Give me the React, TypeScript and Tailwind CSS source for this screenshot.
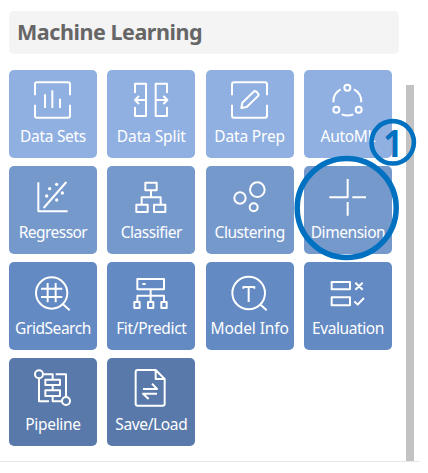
import type { ReactNode } from "react";

type Tile = { label: string; color: string; spacing: string; icon: ReactNode };

const ROW1 = "bg-[#90b0e1]";
const ROW2 = "bg-[#7699cc]";
const ROW3 = "bg-[#638ac3]";
const ROW4 = "bg-[#5879aa]";

const frame = "M78 76V43Q78 37 84 37H177Q183 37 183 43V76M183 104V137Q183 143 177 143H84Q78 143 78 137V104";

const tiles: Tile[] = [
  {
    label: "Data Sets", color: ROW1, spacing: "tracking-[-0.3px]",
    icon: <><path d={frame} /><path d="M108 73V114M130 61V114M153 86V114" /></>,
  },
  {
    label: "Data Split", color: ROW1, spacing: "tracking-[-0.1px]",
    icon: <path d="M84 69V41H117V138H84V111M180 69V41H146V138H180V111M117 90H84M96 78L84 90L96 102M146 90H181M169 78L181 90L169 102" />,
  },
  {
    label: "Data Prep", color: ROW1, spacing: "tracking-[-0.15px]",
    icon: <><path d={frame} /><path d="M106 114L109 98L142 66Q147 61 152 66L156 70Q160 74 155 79L122 111Z" /></>,
  },
  {
    label: "AutoML", color: ROW1, spacing: "tracking-[-0.3px]",
    icon: <><circle cx="130" cy="53" r="9" /><circle cx="97" cy="119" r="9" /><circle cx="164" cy="119" r="9" /><path d="M88 97Q87 70 110 58M150 58Q173 70 172 97M113 133Q130 140 148 133" /></>,
  },
  {
    label: "Regressor", color: ROW2, spacing: "tracking-[-0.55px]",
    icon: <><path d="M88 49V136H176M104 126L172 48" /><g fill="white" stroke="none"><circle cx="122" cy="68" r="5" /><circle cx="113" cy="90" r="5" /><circle cx="143" cy="55" r="5" /><circle cx="160" cy="81" r="5" /><circle cx="143" cy="102" r="5" /></g></>,
  },
  {
    label: "Classifier", color: ROW2, spacing: "tracking-[-0.45px]",
    icon: <path d="M115 50H149V73H115ZM132 73V94M104 115V94H161V115M88 116H122V138H88ZM141 116H175V138H141Z" />,
  },
  {
    label: "Clustering", color: ROW2, spacing: "tracking-[-0.45px]",
    icon: <><circle cx="154" cy="71" r="22" /><circle cx="102" cy="96" r="17" /><circle cx="143" cy="124" r="12" /></>,
  },
  {
    label: "Dimension", color: ROW2, spacing: "tracking-[-0.45px]",
    icon: <path d="M131 39V94H76M145 94H186M131 108V149" />,
  },
  {
    label: "GridSearch", color: ROW3, spacing: "tracking-[-0.45px]",
    icon: <><circle cx="128" cy="93" r="47" /><path d="M162 127L182 145M116 63V121M140 63V121M96 80H160M96 105H160" /></>,
  },
  {
    label: "Fit/Predict", color: ROW3, spacing: "tracking-[-0.35px]",
    icon: <path d="M91 51H171V82H91ZM106 66H116M131 82V119M91 119V101H171V119M82 120H98V138H82ZM123 120H139V138H123ZM163 120H179V138H163Z" />,
  },
  {
    label: "Model Info", color: ROW3, spacing: "tracking-[-0.1px]",
    icon: <><circle cx="128" cy="93" r="49" /><path d="M162 127L182 145M112 80V75H145V80M128 75V120" /></>,
  },
  {
    label: "Evaluation", color: ROW3, spacing: "tracking-[-0.4px]",
    icon: <path d="M83 60H138V82H83ZM83 106H138V130H83ZM154 62L176 83M176 62L154 83M151 118L161 128L180 108" />,
  },
  {
    label: "Pipeline", color: ROW4, spacing: "tracking-[-0.3px]",
    icon: <><circle cx="90" cy="49" r="12" /><circle cx="171" cy="129" r="12" /><path d="M104 49H131V65M109 65H153V81H109ZM131 81V97M109 97H153V114H109ZM131 114V130H157M140 49H171V115M90 63V130H120" /></>,
  },
  {
    label: "Save/Load", color: ROW4, spacing: "tracking-[-0.35px]",
    icon: <path d="M146 36H92Q86 36 86 42V137Q86 143 92 143H167Q173 143 173 137V63L146 36V63H173M108 93H150L135 77M150 107H108L125 123" />,
  },
];

function ToolTile({ label, color, spacing, icon }: Tile) {
  return (
    <button className={`flex h-[88px] w-[88px] flex-col items-center overflow-hidden rounded-[5px] ${color}`}>
      <svg viewBox="0 0 264 162" className="h-[54px] w-[88px] shrink-0 fill-none stroke-white stroke-[6]" strokeLinejoin="round">
        {icon}
      </svg>
      <span className={`whitespace-nowrap text-[15.5px] leading-6 text-white ${spacing}`}>{label}</span>
    </button>
  );
}

export default function App() {
  return (
    <div className="relative h-[473px] w-[428px] overflow-hidden bg-white font-['Noto_Sans','Open_Sans',sans-serif]">
      <div className="flex h-[461.5px] w-[420px] flex-col border-b-[1.5px] border-[#e8e8e8] pl-[9px] pt-[11px]">
        <h1 className="flex h-[43px] w-[390px] shrink-0 items-center rounded-[5px] bg-[#f4f4f4] pl-2 text-[21.5px] font-bold tracking-[-0.45px] text-[#666]">
          Machine Learning
        </h1>
        <div className="flex">
          <div className="mt-4 grid w-[383px] grid-cols-[repeat(4,88px)] content-start justify-between gap-y-2">
            {tiles.map((tile) => <ToolTile key={tile.label} {...tile} />)}
          </div>
          <div className="ml-[14px] mt-[31px] h-[376px] w-2 bg-[#c3c3c3]" />
        </div>
      </div>
      <svg viewBox="0 0 428 473" className="pointer-events-none absolute inset-0 h-[473px] w-[428px] fill-none stroke-[#0070c0]">
        <circle cx="346.7" cy="208" r="49.5" strokeWidth="5.5" />
        <circle cx="392.7" cy="142.3" r="21.2" strokeWidth="4.6" />
      </svg>
      <span className="absolute left-[382px] top-[122px] w-[22px] scale-x-90 text-center text-[38px] font-bold leading-10 text-[#0070c0]">1</span>
    </div>
  );
}
